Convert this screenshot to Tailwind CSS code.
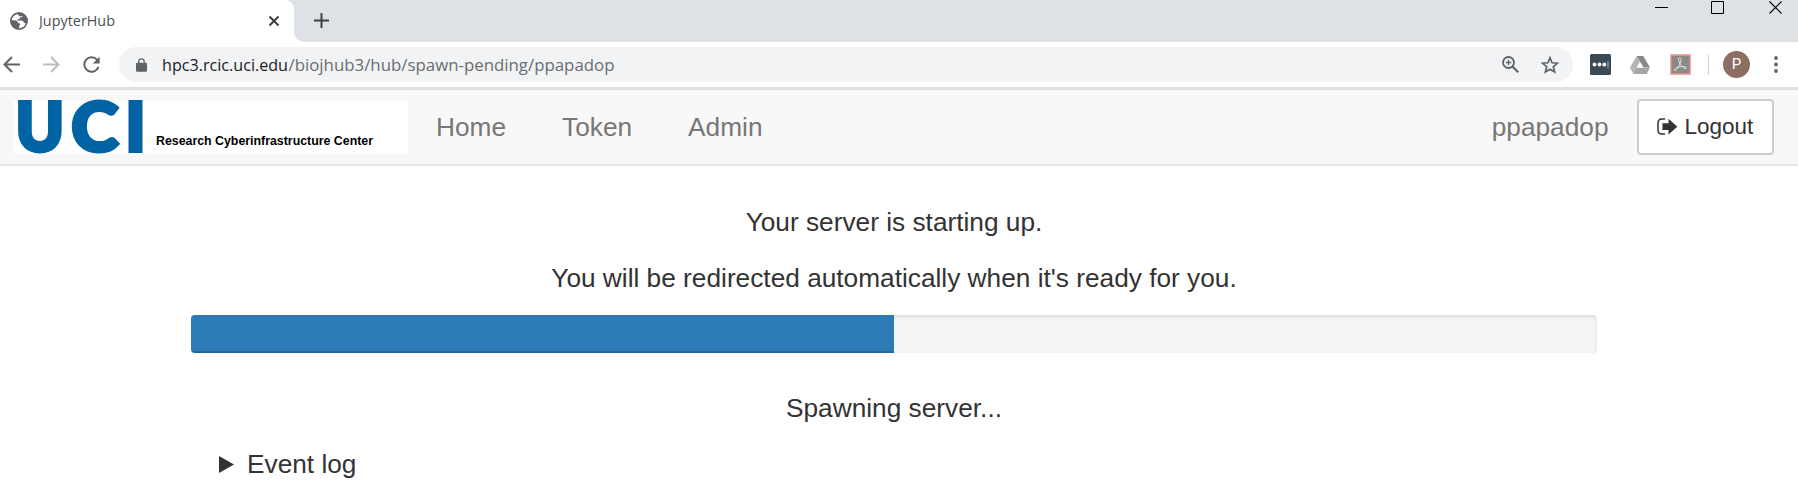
<!DOCTYPE html>
<html lang="en">
<head>
<meta charset="utf-8">
<title>JupyterHub</title>
<script src="https://cdn.jsdelivr.net/npm/@tailwindcss/browser@4"></script>
</head>
<body class="h-[490px] overflow-hidden bg-white font-['Liberation_Sans',sans-serif] text-[#333]">
  <!-- Tab strip -->
  <div class="flex h-[42px] bg-[#dee1e6]">
    <div class="flex h-[42px] w-[294px] items-center rounded-tr-[9px] bg-white pl-[10px]">
      <svg class="mt-[-1px] size-[18px] shrink-0" viewBox="0 0 18 18"><circle cx="9" cy="9" r="9" fill="#5f6368"/><path d="M7.6 2.1C4.5 2.9 2 5.5 1.8 8.2c1.600.200 3.400-.1 4.600.4 1.200.6.600 1.900 1.900 2.300 1 .3 1.900.3 1.900 1.300 0 .9-1 1.100-1.100 2.100v1.900c3.400 0 6-2 6.900-4.900-.8.3-1.900-.1-2.200-1-.4-1.200-1.500-1.700-2.900-1.700H7.600V7.100h2.200V5.300h1.700c.9 0 1-.7.9-1.500-.7.600-1.600.7-2.500.5-1.200-.3-1.900-1.200-2.300-2.200z" fill="#fff"/></svg>
      <svg class="ml-[11px] h-[30px] w-[90px]" viewBox="0 0 90 30"><text x="0" y="20" textLength="76" lengthAdjust="spacingAndGlyphs" font-family="Open Sans" font-size="15" fill="#4c5054">JupyterHub</text></svg>
      <svg class="ml-[139px] size-[12px] shrink-0" viewBox="0 0 12 12"><path d="M1.500 1.500l9 9m0-9l-9 9" stroke="#3c4043" stroke-width="2"/></svg>
    </div>
    <div class="h-[42px] w-[12px] bg-white"><div class="h-full w-full rounded-bl-[10px] bg-[#dee1e6]"></div></div>
    <svg class="mt-[13px] ml-[8px] size-[15px]" viewBox="0 0 15 15"><path d="M0 7.500h15M7.500 0v15" stroke="#3c4043" stroke-width="2"/></svg>
    <div class="ml-auto flex items-start pr-[16px]">
      <svg class="mt-[7px] h-px w-[13px]" viewBox="0 0 13 1"><path d="M0 0h13v1H0z" fill="#000"/></svg>
      <svg class="mt-[1px] ml-[43px] size-[13px]" viewBox="0 0 13 13"><path d="M.5.500h12v12H.5z" fill="none" stroke="#000"/></svg>
      <svg class="mt-[1px] ml-[45px] size-[13px]" viewBox="0 0 13 13"><path d="M.5.500l12 12m0-12l-12 12" stroke="#000" stroke-width="1.100"/></svg>
    </div>
  </div>

  <!-- Toolbar -->
  <div class="flex h-[45px] items-center bg-white">
    <svg class="ml-[3px] size-[17px]" viewBox="0 0 17 17"><path d="M17 8.500H1.500M9 1L1.500 8.500 9 16" fill="none" stroke="#5f6368" stroke-width="2"/></svg>
    <svg class="ml-[23px] size-[17px]" viewBox="0 0 17 17"><path d="M0 8.500h15.500M8 1l7.500 7.500L8 16" fill="none" stroke="#bbbdc0" stroke-width="2"/></svg>
    <svg class="ml-[23px] size-[17px]" viewBox="0 0 18 18"><path d="M15 4.100A7.700 7.700 0 1 0 16.400 11.500" fill="none" stroke="#5f6368" stroke-width="2.100"/><path d="M17.600.7v7.300h-7.300z" fill="#5f6368"/></svg>
    <div class="ml-[19px] flex h-[35px] w-[1454px] items-center rounded-full bg-[#f1f3f4]">
      <svg class="ml-[17px] h-[14px] w-[11px]" viewBox="0 0 11 14"><path d="M2.800 5.500V3.500a2.700 2.700 0 0 1 5.400 0v2" fill="none" stroke="#5f6368" stroke-width="1.300"/><rect y="4.700" width="11" height="9" rx="1.200" fill="#5f6368"/></svg>
      <svg class="ml-[15px] h-[35px] w-[460px]" viewBox="0 0 460 35"><text x="0" y="23.500" textLength="126" lengthAdjust="spacingAndGlyphs" font-family="Open Sans" font-size="17" fill="#202124">hpc3.rcic.uci.edu</text><text x="126.500" y="23.500" textLength="326" lengthAdjust="spacingAndGlyphs" font-family="Open Sans" font-size="17" fill="#696d72">/biojhub3/hub/spawn-pending/ppapadop</text></svg>
      <svg class="ml-auto size-[17px]" viewBox="0 0 17 17"><circle cx="6.500" cy="6.500" r="5.500" fill="none" stroke="#5f6368" stroke-width="1.800"/><path d="M10.500 10.500l5.700 5.700" stroke="#5f6368" stroke-width="2.200"/><path d="M3.700 6.500h5.600M6.500 3.700v5.600" stroke="#5f6368" stroke-width="1.300"/></svg>
      <svg class="mr-[14px] ml-[22px] size-[18px]" viewBox="0 0 18 18"><path d="M9 1.800l2 5 5.400.4-4.100 3.500 1.300 5.300L9 13.200 4.400 16l1.300-5.300-4.100-3.500L7 6.800z" fill="none" stroke="#5f6368" stroke-width="1.700"/></svg>
    </div>
    <svg class="ml-[17px] size-[21px]" viewBox="0 0 21 21"><rect width="21" height="21" rx="1.500" fill="#3b4a57"/><g fill="#fff"><circle cx="4.500" cy="10.500" r="1.900"/><circle cx="9.500" cy="10.500" r="1.900"/><circle cx="14.300" cy="10.500" r="1.900"/></g><path d="M18 7v7.500" stroke="#a9b0b6"/></svg>
    <svg class="ml-[19px] h-[18px] w-[20px]" viewBox="0 0 20 18"><path d="M6.700 0L0 11.600 3.300 18 10 6z" fill="#b5b5b5"/><path d="M6.700 0h6.600L20 11.600h-6.700z" fill="#898989"/><path d="M6.700 11.600H20L16.700 18H3.300z" fill="#a5a5a5"/><path d="M10 6l3.300 5.600H6.700z" fill="#fff"/></svg>
    <svg class="ml-[20px] size-[21px]" viewBox="0 0 21 21"><path d="M.7.700h19.600v19.600H.7z" fill="#8c8889" stroke="#fca99c" stroke-width="1.400"/><path d="M9.500 4c1.500-.7 2 1.200 1.100 4-.9 3.500-3.500 8-5.300 8.500-1.600.4-1.700-1.500 1.400-2.700 3-1.200 6.800-1.500 8.700-.9 1.600.5 1.200 2-.7 1.600C12 13.800 8.400 7.800 8.600 5.200c0-.5.3-1 .9-1.200z" fill="none" stroke="#e5e3e3" stroke-width="1"/></svg>
    <div class="ml-[17px] h-[20px] w-px bg-[#ced1d4]"></div>
    <div class="ml-[14px] flex size-[27px] items-center justify-center rounded-full bg-[#8d6e63] font-['Roboto',sans-serif] text-[15px] text-white">P</div>
    <svg class="ml-[24px] h-[17px] w-[4px]" viewBox="0 0 4 17"><g fill="#5f6368"><circle cx="2" cy="2" r="1.900"/><circle cx="2" cy="8.500" r="1.900"/><circle cx="2" cy="15" r="1.900"/></g></svg>
  </div>

  <!-- Hub navigation -->
  <nav class="flex h-[79px] items-center border-t-[3px] border-b-2 border-t-[#dfe0e1] border-b-[#e7e7e7] bg-[#f8f8f8] text-[26.25px] text-[#777]">
    <svg class="mt-px ml-[14px] h-[53px] w-[394px] overflow-visible bg-white" viewBox="0 0 394 53">
      <g font-family="Lato" font-weight="900" font-size="66" fill="#0064a4" stroke="#0064a4" stroke-width="4">
        <text transform="translate(1.700 50.200) scale(.98 1)">U</text>
        <text transform="translate(57.500 50.200) scale(1.070 1)">C</text>
        <text transform="translate(111.600 50.200)">I</text>
      </g>
      <text x="142" y="44" textLength="217" lengthAdjust="spacingAndGlyphs" font-family="Liberation Sans" font-weight="700" font-size="13" fill="#000">Research Cyberinfrastructure Center</text>
    </svg>
    <div class="mt-px ml-[28px] flex gap-[56px]"><a>Home</a><a>Token</a><a>Admin</a></div>
    <span class="mt-px ml-auto">ppapadop</span>
    <button class="mr-[24px] ml-[28.500px] flex h-[56px] w-[137px] items-center rounded-[4px] border-2 border-[#ccc] bg-white pl-[18px] text-[22.5px] text-[#333]">
      <svg class="h-[18px] w-[21px]" viewBox="0 0 21 18"><path d="M8 1H4.500A3.500 3.500 0 0 0 1 4.500v8A3.500 3.500 0 0 0 4.500 16H8" fill="none" stroke="#333" stroke-width="1.500"/><path d="M5.500 5.300h6V.8l8.800 7.900-8.800 7.900v-4.500h-6z" fill="#333"/></svg>
      <span class="ml-[6.500px]">Logout</span>
    </button>
  </nav>

  <!-- Spawn progress -->
  <main class="ml-[191px] w-[1406px] pt-[38px] text-[26.25px] leading-[37px]">
    <p class="text-center">Your server is starting up.</p>
    <p class="mt-[19px] text-center">You will be redirected automatically when it's ready for you.</p>
    <div class="mt-[18px] h-[38px] overflow-hidden rounded-[4px] bg-[#f5f5f5] shadow-[inset_0_2px_4px_rgba(0,0,0,0.1)]">
      <div class="h-full bg-[#2c7bb6] shadow-[inset_0_-2px_0_rgba(0,0,0,0.15)]" style="width:50%"></div>
    </div>
    <p class="mt-[37px] text-center">Spawning server...</p>
    <div class="mt-[19px] flex items-center pl-[28px]">
      <svg class="h-[17px] w-[15px]" viewBox="0 0 15 17"><path d="M0 0l15 8.500L0 17z" fill="#333"/></svg>
      <span class="ml-[13px]">Event log</span>
    </div>
  </main>
</body>
</html>
